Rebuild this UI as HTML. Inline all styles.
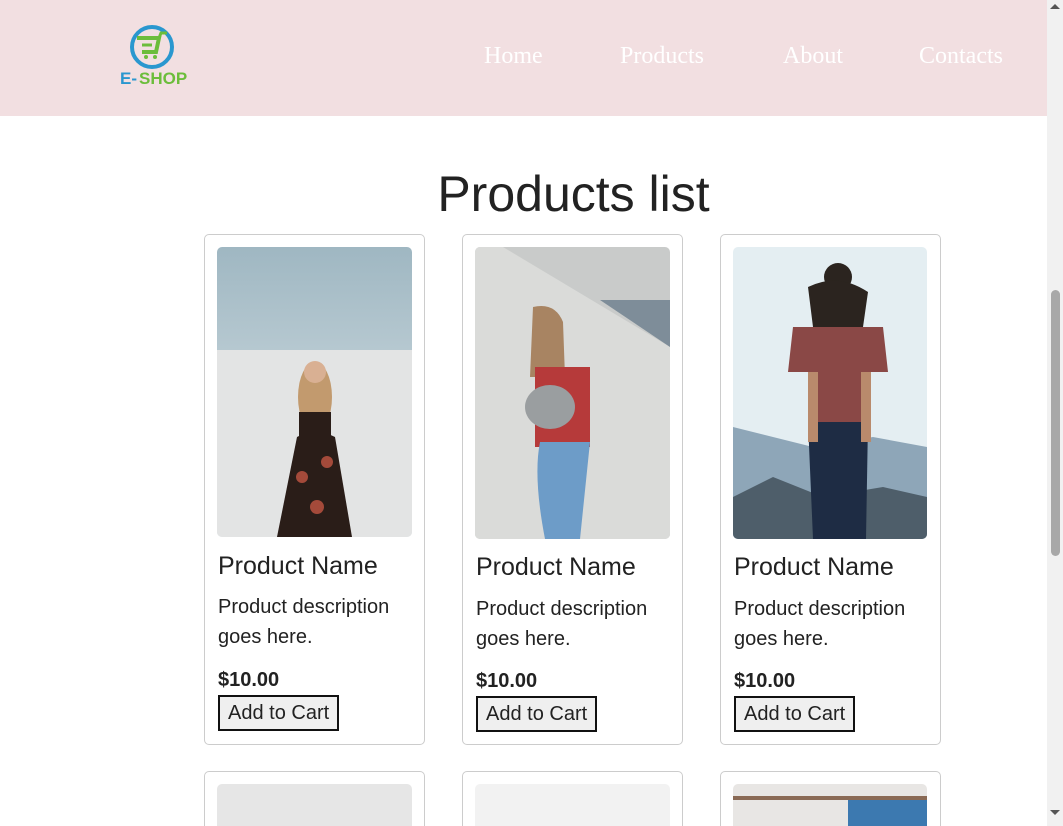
<!DOCTYPE html>
<html><head><meta charset="utf-8"><style>
*{box-sizing:border-box;margin:0;padding:0}
html,body{width:1063px;height:826px;overflow:hidden}
body{background:#fff;font-family:"Liberation Sans",Arial,sans-serif;color:#222;position:relative}
.hdr{position:absolute;left:0;top:0;width:1047px;height:116px;background:#f2dfe1}
.nav{position:absolute;top:43px;font-family:"Liberation Serif",serif;font-size:24px;color:#fff}
h1{position:absolute;top:165px;left:0;width:1147px;text-align:center;font-weight:400;font-size:50px;color:#222}
.card{position:absolute;width:221px;border:1px solid #ccc;border-radius:5px;background:#fff}
.card svg{position:absolute;left:12px;top:12px;border-radius:5px}
.nm{position:absolute;left:13px;font-size:25px}
.ds{position:absolute;left:13px;font-size:20px;line-height:30px}
.pr{position:absolute;left:13px;font-size:20px;font-weight:bold}
.bt{position:absolute;left:13px;height:36px;padding:0 8px;border:2px solid #111;background:#efefef;font-size:20px;line-height:32px}
.sb{position:absolute;left:1047px;top:0;width:16px;height:826px;background:#f1f1f1}
.th{position:absolute;left:1051px;top:290px;width:9px;height:266px;background:#a8a8a8;border-radius:5px}
</style></head><body>
<div class="hdr">
<svg style="position:absolute;left:118px;top:22px" width="72" height="70" viewBox="0 0 72 70">
<circle cx="34" cy="25" r="20" fill="none" stroke="#2a97cf" stroke-width="4"/>
<path d="M19 16h22l-3 14H24" fill="none" stroke="#6cbd3b" stroke-width="4"/>
<path d="M24 23h10M41 16l2-5h6" fill="none" stroke="#6cbd3b" stroke-width="3"/>
<circle cx="28" cy="35" r="2" fill="#6cbd3b"/><circle cx="37" cy="35" r="2" fill="#6cbd3b"/>
<text x="2" y="62" font-family="Liberation Sans" font-weight="bold" font-size="17" fill="#2a97cf">E-</text>
<text x="21" y="62" font-family="Liberation Sans" font-weight="bold" font-size="17" fill="#6cbd3b">SHOP</text>
</svg>
<div class="nav" style="left:484px">Home</div>
<div class="nav" style="left:620px">Products</div>
<div class="nav" style="left:783px">About</div>
<div class="nav" style="left:919px">Contacts</div>
</div>
<h1>Products list</h1>

<div class="card" style="left:204px;top:234px;height:511px">
<svg width="195" height="290" viewBox="0 0 195 290"><defs><linearGradient id="s1" x1="0" y1="0" x2="0" y2="1"><stop offset="0" stop-color="#9fb7c2"/><stop offset="1" stop-color="#dfe7ea"/></linearGradient></defs>
<rect width="195" height="290" fill="url(#s1)"/><rect y="103" width="195" height="187" fill="#e3e4e4"/>
<ellipse cx="98" cy="150" rx="17" ry="35" fill="#c29a6e"/><circle cx="98" cy="125" r="11" fill="#d9b093"/>
<path d="M80 190 Q98 180 118 190 L135 290 H60 Z" fill="#2a1d18"/><rect x="82" y="165" width="32" height="30" fill="#2a1d18"/>
<circle cx="85" cy="230" r="6" fill="#a44a3a"/><circle cx="110" cy="215" r="6" fill="#a44a3a"/><circle cx="100" cy="260" r="7" fill="#a44a3a"/></svg>
<div class="nm" style="top:317px">Product Name</div>
<div class="ds" style="top:357px">Product description<br>goes here.</div>
<div class="pr" style="top:434px">$10.00</div>
<div class="bt" style="top:460px">Add to Cart</div>
</div>

<div class="card" style="left:462px;top:234px;height:511px">
<svg width="195" height="292" viewBox="0 0 195 292"><rect width="195" height="292" fill="#c9cbca"/>
<path d="M0 0H28L195 100V292H0Z" fill="#dadbd9"/><path d="M125 53H195V100Z" fill="#7e8d99"/>
<path d="M58 60 Q80 55 88 75 L90 130 H55 Z" fill="#a88462"/>
<rect x="60" y="120" width="55" height="80" fill="#b63a3a"/><ellipse cx="75" cy="160" rx="25" ry="22" fill="#9a9ea0"/>
<path d="M65 195H115L105 292H70Q58 230 65 195Z" fill="#6d9cc8"/></svg>
<div class="nm" style="top:318px">Product Name</div>
<div class="ds" style="top:359px">Product description<br>goes here.</div>
<div class="pr" style="top:435px">$10.00</div>
<div class="bt" style="top:461px">Add to Cart</div>
</div>

<div class="card" style="left:720px;top:234px;height:511px">
<svg width="194" height="292" viewBox="0 0 194 292"><rect width="194" height="292" fill="#e4eef2"/>
<path d="M0 180L40 190L80 200L140 190L194 200V292H0Z" fill="#8ea6b8"/><path d="M0 250L40 230L90 250L150 240L194 250V292H0Z" fill="#4e5e6a"/>
<circle cx="105" cy="30" r="14" fill="#2b241f"/><path d="M75 40Q105 25 135 45L130 80H80Z" fill="#2b241f"/>
<path d="M60 80H150L155 125H135L130 175H80L75 125H55Z" fill="#8a4846"/>
<path d="M75 175H135L133 292H80Z" fill="#1e2c44"/><rect x="75" y="125" width="10" height="70" fill="#b98a6c"/><rect x="128" y="125" width="10" height="70" fill="#b98a6c"/></svg>
<div class="nm" style="top:318px">Product Name</div>
<div class="ds" style="top:359px">Product description<br>goes here.</div>
<div class="pr" style="top:435px">$10.00</div>
<div class="bt" style="top:461px">Add to Cart</div>
</div>

<div class="card" style="left:204px;top:771px;height:80px"><svg width="195" height="60"><rect width="195" height="60" fill="#e6e6e6"/></svg></div>
<div class="card" style="left:462px;top:771px;height:80px"><svg width="195" height="60"><rect width="195" height="60" fill="#f2f2f2"/><ellipse cx="85" cy="55" rx="18" ry="12" fill="#3a2e28"/></svg></div>
<div class="card" style="left:720px;top:771px;height:80px"><svg width="194" height="60"><rect width="194" height="60" fill="#e8e6e4"/><rect y="12" width="194" height="4" fill="#8a6a55"/><rect x="115" y="16" width="79" height="44" fill="#3c79b0"/></svg></div>

<div class="sb"></div><div class="th"></div>
<div style="position:absolute;left:1050px;top:4px;width:0;height:0;border:5px solid transparent;border-bottom-color:#555;border-top:0"></div>
<div style="position:absolute;left:1050px;top:810px;width:0;height:0;border:5px solid transparent;border-top-color:#555;border-bottom:0"></div>
</body></html>
